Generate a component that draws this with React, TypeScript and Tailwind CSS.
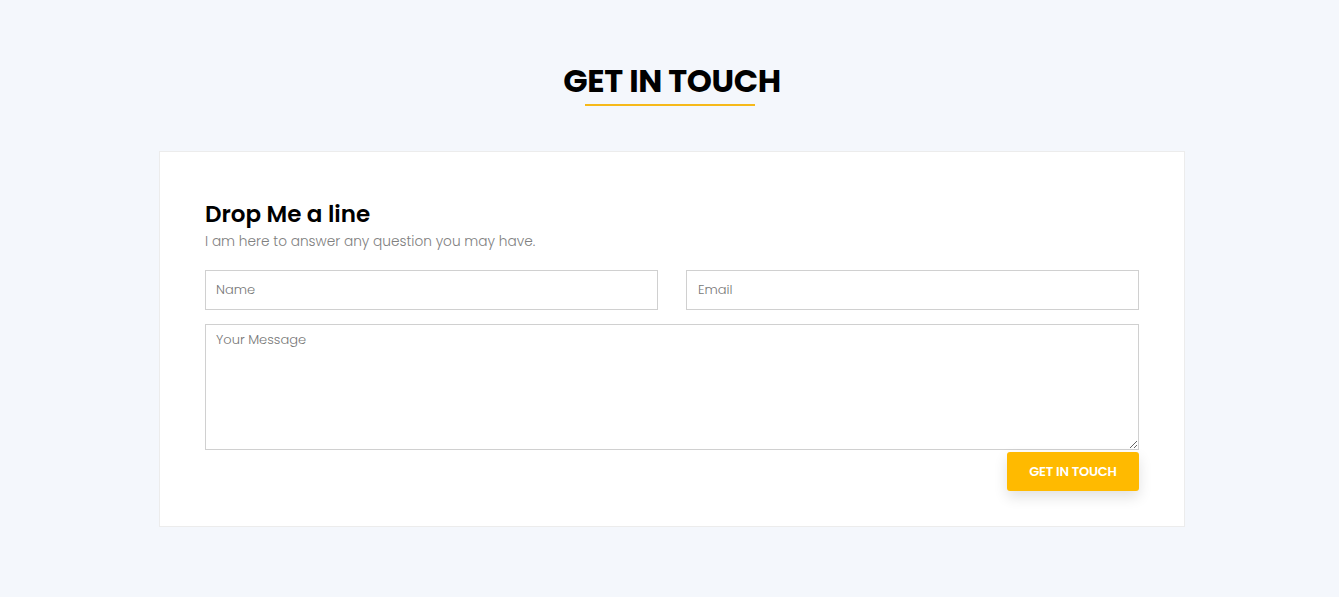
import React from 'react';

export default function App() {
    return (
        <div className="min-h-[597px] bg-[#f4f7fc] pt-[59px] font-['Poppins','Inter',sans-serif]">
            <div className="flex flex-col items-center">
                <h2 className="pl-[5px] text-[32px] font-bold leading-[44px] tracking-[-0.4px] text-black">GET IN TOUCH</h2>
                <div className="mt-[1px] h-[2px] w-[170px] bg-[#f6b91a]" />
            </div>

            <div className="pl-[5px]">
                <div className="mx-auto mt-[45px] w-[1026px] border border-[#ececec] bg-white px-[45px] pt-[47px] pb-[35px]">
                    <h3 className="text-[23px] font-semibold leading-[30px] text-black">Drop Me a line</h3>
                    <p className="mt-[3px] text-[13.7px] font-light leading-[20px] text-[#808080]">I am here to answer any question you may have.</p>

                    <form className="mt-[18px]">
                        <div className="grid grid-cols-2 gap-[28px]">
                            <input
                                className="h-[40px] border border-[#d0d0d0] px-[10px] text-[13px] font-light text-[#555] outline-none placeholder:text-[#777]"
                                placeholder="Name"
                            />
                            <input
                                className="h-[40px] border border-[#d0d0d0] px-[11px] text-[13px] font-light text-[#555] outline-none placeholder:text-[#777]"
                                placeholder="Email"
                            />
                        </div>
                        <textarea
                            className="mt-[14px] block h-[126px] w-full border border-[#d0d0d0] px-[10px] py-[5px] text-[13px] font-light text-[#555] outline-none placeholder:text-[#777]"
                            placeholder="Your Message"
                        />
                        <div className="flex justify-end">
                            <button
                                type="button"
                                className="mt-[2px] h-[39px] w-[132px] rounded-[3px] bg-[#ffba00] text-[13px] font-semibold tracking-[-0.2px] text-white shadow-[0_6px_14px_rgba(0,0,0,0.12)]"
                            >
                                GET IN TOUCH
                            </button>
                        </div>
                    </form>
                </div>
            </div>
        </div>
    );
}
